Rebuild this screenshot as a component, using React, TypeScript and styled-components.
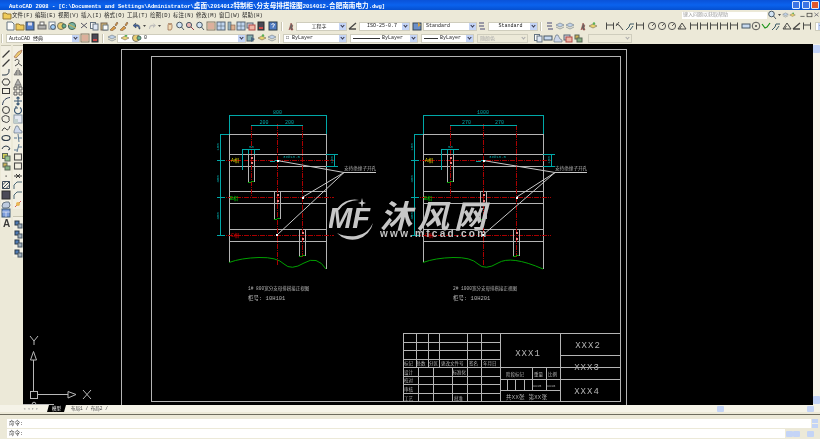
import React from 'react';
import styled, { createGlobalStyle } from 'styled-components';

const CHROME = '#ece9d8';
const LINE = '#b4b4b4';
const RED = '#a80000';
const CYAN = '#00a8a8';
const GREEN = '#00a000';
const CJK = '"Liberation Mono", "Noto Sans CJK SC", monospace';

const icons: Record<string, React.ReactNode> = {
  page: <path d="M2 1h5l2 2v6H2z" fill="#fff" stroke="#567" />,
  open: <path d="M1 3h3l1 1h4v5H1z" fill="#f0c84a" stroke="#8a6a20" />,
  save: <g><rect x="1" y="1" width="8" height="8" fill="#3f6fc8" stroke="#234" /><rect x="3" y="1.5" width="4" height="3" fill="#dde" /></g>,
  print: <g><rect x="1" y="4" width="8" height="4" fill="#aaa" stroke="#555" /><rect x="3" y="1" width="4" height="3" fill="#fff" stroke="#555" /></g>,
  preview: <g><rect x="2" y="1" width="6" height="7" fill="#fff" stroke="#678" /><circle cx="6" cy="6" r="2.4" fill="#9cf" stroke="#345" /></g>,
  sheet: <g><circle cx="4" cy="5" r="3.5" fill="#e8c860" stroke="#665" /><circle cx="7" cy="5" r="2" fill="#5a8" stroke="#354" /></g>,
  globe: <g><circle cx="5" cy="5" r="3.6" fill="#6a9" stroke="#354" /><path d="M1 3l8 4" stroke="#ca4" fill="none" /></g>,
  cut: <path d="M2 2l6 5M8 2L2 7" stroke="#445" fill="none" />,
  copy: <g><rect x="1.5" y="1.5" width="5" height="6" fill="#fff" stroke="#567" /><rect x="4" y="3" width="5" height="6" fill="#dfe8f8" stroke="#567" /></g>,
  paste: <g><rect x="2" y="2" width="6" height="7" fill="#d8b060" stroke="#654" /><rect x="4" y="4" width="5" height="5" fill="#fff" stroke="#567" /></g>,
  brush: <path d="M1 9l4-4 2 2-4 3zM6 4l2-3 1 1-2 3z" fill="#d89030" stroke="#643" strokeWidth=".6" />,
  undo: <path d="M8 8C8 4 6 3 3 4L4 2 1 4.5 4 7V5c2 0 3 1 3 3z" fill="#2a50a0" stroke="#123" strokeWidth=".5" />,
  redo: <path d="M2 8c0-4 2-5 5-4L6 2l3 2.500L6 7V5C4 5 3 6 3 8z" fill="#b8b8b8" />,
  caret: <path d="M2 3h6L5 7z" fill="#333" />,
  pan: <path d="M3 9V4l1-2 1 2 1-2 1 2v3l-1 2z" fill="#f2d8b0" stroke="#853" strokeWidth=".7" />,
  zoom: <g><circle cx="4.500" cy="4" r="2.800" fill="#cfe4fa" stroke="#345" /><path d="M6.500 6l2.500 3" stroke="#345" /></g>,
  zoomr: <g><circle cx="4" cy="4" r="2.600" fill="#e8b0b0" stroke="#345" /><path d="M6 6l3 3" stroke="#823" /></g>,
  props: <g><rect x="1" y="1" width="8" height="8" fill="#f4e8c8" stroke="#765" /><path d="M2 3h6M2 5h6M2 7h6" stroke="#a33" strokeWidth=".7" /></g>,
  sheetset: <g><rect x="1" y="1" width="8" height="8" fill="#bcd4f4" stroke="#456" /><path d="M5 1v8M1 5h8" stroke="#456" strokeWidth=".6" /></g>,
  tool: <g><rect x="2" y="1" width="3" height="8" fill="#8ab" stroke="#345" strokeWidth=".6" /><rect x="5" y="4" width="4" height="5" fill="#da8" stroke="#643" strokeWidth=".6" /></g>,
  stack: <g><rect x="1" y="2" width="6" height="5" fill="#ccd" stroke="#456" /><rect x="3" y="4" width="6" height="5" fill="#f0b0a0" stroke="#a33" /></g>,
  dark: <g><rect x="2" y="1" width="6" height="8" fill="#334" stroke="#111" /><rect x="3" y="6" width="4" height="2" fill="#c33" /></g>,
  help: <g><rect x="1" y="1" width="8" height="8" fill="#3a6cc0" stroke="#123" /><path d="M3.500 3.500Q5 1.800 6.500 3.500 6.500 4.600 5 5.500V6.500" stroke="#fff" fill="none" /></g>,
  textstyle: <path d="M3 9l2-7 2 3-1 1 1 3H5L4.500 7z" fill="#555" stroke="#822" strokeWidth=".5" />,
  dimstyle: <path d="M1 8L8 2M1 8h7" stroke="#333" strokeWidth="1.300" fill="none" />,
  tablestyle: <g><rect x="1" y="2" width="8" height="7" fill="#5a84c8" stroke="#234" /><path d="M6 1l3 3-3 2" fill="#c93" /></g>,
  mlstyle: <path d="M2 2h5M2 5h5M3 8h5" stroke="#336" strokeWidth="1.200" fill="none" />,
  layer: <g><path d="M5 2l4 2-4 2-4-2z" fill="#bcd0ec" stroke="#567" strokeWidth=".6" /><path d="M1 6l4 2 4-2" fill="none" stroke="#567" strokeWidth=".6" /></g>,
  layerS: <g><path d="M5 3l4 2-4 2-4-2z" fill="#e8d060" stroke="#654" strokeWidth=".6" /><circle cx="6" cy="2.500" r="1.200" fill="#4a4" /></g>,
  layerT: <g><rect x="1" y="2" width="6" height="6" fill="#7aa" stroke="#345" /><path d="M5 4l4 2-4 3z" fill="#357" /></g>,
  linear: <path d="M1.500 1.500v7M8.500 1.500v7M1.500 4h7" stroke="#333" fill="none" />,
  aligned: <path d="M1 3l3 1 4 5M4 1L1 5" stroke="#333" fill="none" />,
  ordinate: <path d="M1 9l3-3 1-3h4M5 9l3-4" stroke="#245" fill="none" />,
  radius: <g><circle cx="5" cy="5" r="3.600" fill="none" stroke="#444" /><path d="M5 5l3-3" stroke="#444" /></g>,
  angle: <path d="M1 8h8L5 2zM3 8q0-2 1.500-3" fill="none" stroke="#333" />,
  tolerance: <rect x="1" y="3" width="8" height="4" fill="#c4d8f4" stroke="#345" />,
  center: <g><circle cx="5" cy="5" r="3.800" fill="none" stroke="#444" /><circle cx="5" cy="5" r="1" fill="#333" /></g>,
  check: <path d="M1 3l3 4 2-1 3-4" stroke="#080" fill="none" strokeWidth="1.200" />,
  line: <path d="M1.500 8.500l7-7" stroke="#222" fill="none" strokeWidth="1.200" />,
  pline: <path d="M1 8h3c3 0 4-2 4-4V2" stroke="#123" fill="none" />,
  polygon: <path d="M3 2h4l2 3-2 3H3L1 5z" stroke="#222" fill="none" />,
  rect: <rect x="1.500" y="2.500" width="7" height="5" stroke="#222" fill="none" />,
  minus: <path d="M2 7h6" stroke="#444" fill="none" strokeWidth="1.200" />,
  arc: <path d="M1.500 9C2 4 5 2 9 1.500" stroke="#124" fill="none" />,
  circle: <circle cx="5" cy="5" r="3.500" stroke="#222" fill="none" />,
  cloud: <path d="M3 2q2-1 3 0 3 0 2 3 1 2-1 3-2 1-3 0-3 0-3-3-1-2 2-3z" stroke="#333" fill="none" />,
  spline: <path d="M1 7q2-5 4-2t4-3" stroke="#333" fill="none" />,
  ellipse: <ellipse cx="5" cy="5" rx="4" ry="2.500" stroke="#123" fill="none" strokeWidth="1.200" />,
  ellarc: <path d="M1 6Q2 3 5 3t4 3L7 7" stroke="#123" fill="none" />,
  block: <g><rect x="1.500" y="1.500" width="5" height="5" fill="#cc4" stroke="#454" /><rect x="4" y="4" width="5" height="5" fill="#8b8" stroke="#454" /></g>,
  insert: <g><rect x="2" y="2" width="4" height="4" fill="#ca4" stroke="#454" /><rect x="4" y="5" width="5" height="4" fill="#7a7" stroke="#454" /></g>,
  point: <rect x="4.500" y="4.500" width="1.200" height="1.200" fill="#222" />,
  hatch: <path d="M1.500 1.500h7v7h-7zM1.500 5l3.500-3.500M1.500 8.500l7-7M5 8.500L8.500 5" fill="none" stroke="#234" />,
  grad: <rect x="1" y="1" width="8" height="8" fill="#334" stroke="#111" />,
  region: <path d="M1 7q0-4 4-4h3l1 3q0 3-3 3H2z" fill="#b8c8e0" stroke="#567" />,
  table: <g><rect x="1" y="1" width="8" height="8" fill="#6c92dc" stroke="#246" /><path d="M1 4h8M5 4v5" stroke="#fff" strokeWidth=".6" /></g>,
  mtext: <text x="2" y="9" fontSize="10" fontWeight="700" fontFamily="Liberation Sans" fill="#222">A</text>,
  erase: <path d="M1 8l4-5 4-2-1 3-5 5z" fill="#e8c860" stroke="#954" strokeWidth=".7" />,
  cloneobj: <path d="M2 3a2 2 0 1 1 3 2l4 3M2 8l3-2" stroke="#333" fill="none" />,
  mirror: <path d="M5 1v8M1 8l3-5v5zM9 8L6 3v5z" fill="#999" stroke="#444" strokeWidth=".6" />,
  offset: <path d="M2 8l3-6 3 6zM1 9h8" fill="#aaa" stroke="#444" strokeWidth=".7" />,
  array: <path d="M1 1h3v3H1zM6 1h3v3H6zM1 6h3v3H1zM6 6h3v3H6z" fill="none" stroke="#444" />,
  move: <path d="M5 1v8M1 5h8M3.500 2.500L5 1l1.500 1.500M3.500 7.500L5 9l1.500-1.500" stroke="#246" fill="none" strokeWidth="1.100" />,
  rotate: <path d="M3 2.500A3.500 3.500 0 1 0 7 2.500M3 1v2h2" stroke="#246" fill="none" strokeWidth="1.100" />,
  scale: <g><rect x="1" y="1" width="8" height="8" fill="#e4e8f4" stroke="#789" /><rect x="1" y="5" width="4" height="4" fill="#bcc" /></g>,
  stretch: <path d="M1 9V7l2-5h2l2 4 2 1v2z" fill="#c8d4ec" stroke="#567" strokeWidth=".7" />,
  trim: <path d="M1 5h3M6 5h3M5 1l1 8" stroke="#468" fill="none" />,
  extend: <path d="M1 7h3M5 4h4M6 1L4 9" stroke="#468" fill="none" />,
  breakb: <rect x="1.500" y="2" width="7" height="6" fill="none" stroke="#333" strokeWidth="1.100" />,
  join: <path d="M1 5h3M6 5h3M3 3l2 2-2 2M7 3L5 5l2 2" stroke="#222" fill="none" />,
  chamfer: <path d="M1 9V5l3-3h5" stroke="#356" fill="none" />,
  explode: <g><path d="M2 8l3-3 3-3" stroke="#c44" /><circle cx="5" cy="5" r="2" fill="#e8b040" /></g>,
  draw: <g><rect x="2" y="2" width="4" height="4" fill="#3a6cb0" stroke="#123" /><rect x="5" y="5" width="4" height="4" fill="#9ab" stroke="#345" /></g>,
};

const row1L: (string | number)[] = ['page', 'open', 'save', 2, 'print', 'preview', 'sheet', 'globe', 2, 'cut', 'copy', 'paste', 'brush', 'brush', 3, 'undo', 'caret', 'redo', 'caret', 3, 'pan', 'zoom', 'zoomr', 'zoom', 1, 'props', 'sheetset', 'tool', 'sheetset', 'stack', 'dark', 2, 'help'];
const row1R: (string | number)[] = ['mlstyle', 'layer', 'layer', 3, 'textstyle', 'layerS', 7, 'linear', 'aligned', 'ordinate', 'linear', 2, 'radius', 'radius', 'radius', 'angle', 2, 'linear', 'linear', 'linear', 'linear', 'linear', 2, 'tolerance', 'center', 'check', 'ordinate', 1, 'angle', 'dimstyle', 'linear'];
const row2R: (string | number)[] = ['copy', 'tolerance', 'stretch', 'stack', 'insert'];
const leftA = ['line', 'line', 'pline', 'polygon', 'rect', 'arc', 'circle', 'cloud', 'spline', 'ellipse', 'ellarc', 'block', 'insert', 'point', 'hatch', 'grad', 'region', 'table', 'mtext'];
const leftB = ['erase', 'cloneobj', 'mirror', 'offset', 'array', 'move', 'rotate', 'scale', 'stretch', 'trim', 'extend', 'breakb', 'breakb', 'join', 'chamfer', 'chamfer', 'explode'];
const menus = ['文件(F)', '编辑(E)', '视图(V)', '插入(I)', '格式(O)', '工具(T)', '绘图(D)', '标注(N)', '修改(M)', '窗口(W)', '帮助(H)'];

const Global = createGlobalStyle`
  html, body { margin: 0; padding: 0; background: ${CHROME}; overflow: hidden; }
`;

const Window = styled.div`
  width: 820px;
  height: 439px;
  display: flex;
  flex-direction: column;
  overflow: hidden;
  background: ${CHROME};
  font-family: ${CJK};
  filter: blur(0.35px);
`;

const TitleBar = styled.div`
  height: 10px;
  flex: none;
  display: flex;
  align-items: center;
  padding: 0 1px 0 9px;
  background: linear-gradient(#0a52d8, #0a62ee 50%, #0550d0);
  color: #fff;
  font-size: 5.5px;
  font-weight: 700;
  white-space: nowrap;
`;

const TitleText = styled.span`
  flex: 1;
`;

const Han = styled.span`
  font-size: 6.6px;
`;

const WinButton = styled.span<{ $close?: boolean }>`
  width: 8px;
  height: 8px;
  margin-left: 1.500px;
  box-sizing: border-box;
  border: 1px solid #dfe8fb;
  border-radius: 1px;
  background: ${(p) => (p.$close ? '#e0562c' : '#3c74e4')};
`;

const MenuBar = styled.div`
  height: 10px;
  flex: none;
  display: flex;
  align-items: center;
  padding-left: 2px;
  font-size: 5.5px;
  color: #222;
`;

const MenuItem = styled.span`
  width: 23px;
  white-space: nowrap;
`;

const HelpBox = styled.div`
  margin-left: auto;
  width: 85px;
  height: 7px;
  background: #fff;
  font-size: 5px;
  line-height: 7px;
  color: #999;
  padding-left: 1px;
  box-sizing: border-box;
  white-space: nowrap;
`;

const HelpIcons = styled.div`
  display: flex;
  align-items: center;
  width: 53px;
  flex: none;
`;

const ToolRow = styled.div`
  height: 12px;
  flex: none;
  display: flex;
  align-items: center;
  overflow: hidden;
`;

const Tool = styled.svg<{ $w: number }>`
  width: ${(p) => p.$w}px;
  height: 10px;
  flex: none;
  opacity: 0.88;
`;

const Spacer = styled.span<{ $w: number }>`
  width: ${(p) => p.$w}px;
  flex: none;
`;

const Grip = styled.span`
  width: 2px;
  height: 9px;
  flex: none;
  margin: 0 3px 0 1px;
  border-left: 1px solid #c8c5b2;
  border-right: 1px solid #fff;
  box-sizing: border-box;
`;

const Combo = styled.div<{ $w: number; $off?: boolean }>`
  width: ${(p) => p.$w}px;
  height: 9px;
  flex: none;
  box-sizing: border-box;
  display: flex;
  align-items: center;
  border: 1px solid #cfcdbd;
  background: ${(p) => (p.$off ? CHROME : '#fff')};
  color: ${(p) => (p.$off ? '#aaa' : '#222')};
  font-size: 5px;
  white-space: nowrap;
  overflow: hidden;
`;

const ComboText = styled.span<{ $center?: boolean }>`
  flex: 1;
  display: flex;
  align-items: center;
  justify-content: ${(p) => (p.$center ? 'center' : 'flex-start')};
  gap: 2px;
  padding-left: 2px;
`;

const ComboArrow = styled.span<{ $off?: boolean }>`
  width: 7px;
  height: 100%;
  flex: none;
  background: ${(p) => (p.$off ? CHROME : '#c4d4f6')};
  position: relative;
  &::after {
    content: '';
    position: absolute;
    left: 2px;
    top: 1.500px;
    width: 2px;
    height: 2px;
    border-right: 1px solid ${(p) => (p.$off ? '#aaa' : '#334')};
    border-bottom: 1px solid ${(p) => (p.$off ? '#aaa' : '#334')};
    transform: rotate(45deg);
  }
`;

const Swatch = styled.span<{ $w: number }>`
  width: ${(p) => p.$w}px;
  height: 1px;
  background: #333;
`;

const Workspace = styled.div`
  flex: 1;
  min-height: 0;
  display: flex;
`;

const Dock = styled.div`
  width: 23px;
  flex: none;
  display: flex;
  gap: 1px;
  align-items: flex-start;
  padding-top: 1px;
  box-sizing: border-box;
`;

const DockColumn = styled.div`
  width: 11px;
  display: flex;
  flex-direction: column;
  align-items: center;
  gap: 7px;
`;

const DockBar = styled.div`
  display: flex;
  flex-direction: column;
  align-items: center;
  padding-top: 3px;
  border-top: 1px solid #c8c5b2;
  background: #f2efe2;
`;

const DockSlot = styled.span`
  height: 9.4px;
  display: flex;
  align-items: center;
`;

const Canvas = styled.div`
  flex: 1;
  position: relative;
  background: #000;
  overflow: hidden;
`;

const Drawing = styled.svg`
  display: block;
  shape-rendering: crispEdges;
  font-family: ${CJK};
`;

const Small = styled.text<{ $tone?: string; $size?: number }>`
  fill: ${(p) => p.$tone ?? LINE};
  font-size: ${(p) => p.$size ?? 5}px;
  shape-rendering: auto;
`;

const Watermark = styled.div`
  position: absolute;
  left: 306px;
  top: 152px;
  display: flex;
  gap: 1px;
  color: #c6c6c6;
`;

const Brand = styled.div`
  display: flex;
  flex-direction: column;
  width: 110px;
`;

const BrandName = styled.span`
  font-family: "Noto Sans CJK SC", sans-serif;
  font-size: 32px;
  line-height: 36px;
  font-weight: 700;
  font-style: italic;
  letter-spacing: 5px;
  white-space: nowrap;
`;

const BrandUrl = styled.span`
  font-family: "Liberation Sans", sans-serif;
  font-size: 10px;
  line-height: 9px;
  font-weight: 700;
  letter-spacing: 2.300px;
  white-space: nowrap;
  margin-top: -3px;
`;

const VScroll = styled.div`
  width: 7px;
  flex: none;
  display: flex;
  flex-direction: column;
  justify-content: space-between;
  padding: 1px 0;
  box-sizing: border-box;
  background: #f6f4ea;
`;

const ScrollBtn = styled.span`
  width: 7px;
  height: 8px;
  background: #c4d4f6;
  border-radius: 1px;
  display: block;
`;

const TabRow = styled.div`
  height: 7px;
  flex: none;
  display: flex;
  align-items: center;
  padding-left: 23px;
  font-size: 4.500px;
  background: #f5f3e8;
  color: #444;
`;

const TabNav = styled.span`
  width: 24px;
  color: #999;
  letter-spacing: 1.500px;
  white-space: nowrap;
`;

const Tab = styled.span<{ $active?: boolean }>`
  height: 7px;
  line-height: 7px;
  padding: 0 5px;
  white-space: nowrap;
  background: ${(p) => (p.$active ? '#000' : 'transparent')};
  color: ${(p) => (p.$active ? '#fff' : '#444')};
  clip-path: ${(p) => (p.$active ? 'polygon(2px 0, 100% 0, calc(100% - 2px) 100%, 0 100%)' : 'none')};
`;

const HScroll = styled.div`
  margin-left: auto;
  width: 110px;
  height: 7px;
  display: flex;
  align-items: center;
  padding-left: 7px;
  box-sizing: border-box;
`;

const Thumb = styled.span<{ $mr: number }>`
  width: 7px;
  height: 6px;
  margin-right: ${(p) => p.$mr}px;
  background: #c4d4f6;
  border-radius: 1px;
  flex: none;
`;

const Command = styled.div`
  height: 25px;
  flex: none;
  box-sizing: border-box;
  border-top: 1px solid #6e6c5e;
  margin-top: 2px;
  padding: 4px 0 0 7px;
  display: flex;
  flex-direction: column;
  gap: 1px;
`;

const CommandRow = styled.div`
  height: 9px;
  flex: none;
  display: flex;
  align-items: center;
`;

const CommandLine = styled.div`
  flex: 1;
  height: 100%;
  background: #fff;
  font-size: 5.500px;
  line-height: 9px;
  color: #333;
  padding-left: 2px;
`;

const CommandSide = styled.div<{ $w: number }>`
  width: ${(p) => p.$w}px;
  flex: none;
  display: flex;
  align-items: center;
  padding-left: 1px;
  box-sizing: border-box;
`;

const Stepper = styled.span`
  width: 6px;
  height: 9px;
  background: linear-gradient(#c4d4f6 45%, #f0efe6 45% 55%, #c4d4f6 55%);
`;

const Icon = ({ kind, w = 10 }: { kind: string; w?: number }) => (
  <Tool $w={w} viewBox="0 0 10 10">{icons[kind]}</Tool>
);

const Tools = ({ items }: { items: (string | number)[] }) => (
  <>
    {items.map((it, i) =>
      typeof it === 'number' ? (
        <Spacer key={i} $w={it} />
      ) : (
        <Icon key={i} kind={it} w={it === 'caret' ? 5 : 10} />
      ),
    )}
  </>
);

const Select = ({ w, off, center, children }: { w: number; off?: boolean; center?: boolean; children?: React.ReactNode }) => (
  <Combo $w={w} $off={off}>
    <ComboText $center={center}>{children}</ComboText>
    <ComboArrow $off={off} />
  </Combo>
);

type PlateProps = {
  x0: number; x1: number; v: [number, number, number];
  total: string; part: string; leader: number; no: string; title: string; capX: number;
};

const Plate = ({ x0, x1, v, total, part, leader, no, title, capX }: PlateProps) => {
  const rows = [134, 154, 166, 191, 203, 229, 241];
  const busY = [160, 197, 235];
  const holes = [[v[0], 149, 182], [v[1], 191, 219], [v[2], 229, 256]];
  const dimL = x0 - 9;
  const dimR = x1 + 8;
  const mid = (x0 + x1) / 2;
  return (
    <g fill="none">
      {rows.map((y) => <line key={y} x1={x0} x2={x1} y1={y + 0.5} y2={y + 0.5} stroke={LINE} />)}
      <line x1={x0 + 0.5} x2={x0 + 0.5} y1={134} y2={262} stroke={LINE} />
      <line x1={x1 + 0.5} x2={x1 + 0.5} y1={134} y2={269} stroke={LINE} />
      <path
        d={`M${x0} 262.500Q${x0 + 12} 258 ${x0 + 30} 257.500T${x0 + 55} 264T${x0 + 75} 263T${x1} 269`}
        stroke={GREEN}
        style={{ shapeRendering: 'auto' }}
      />
      {busY.map((y) => (
        <line key={y} x1={dimL} x2={dimR} y1={y + 0.5} y2={y + 0.5} stroke={RED} strokeDasharray="5 1 1 1" />
      ))}
      <line x1={v[0] + 0.5} x2={v[0] + 0.5} y1={125} y2={197} stroke={RED} strokeDasharray="5 1 1 1" />
      <line x1={v[1] + 0.5} x2={v[1] + 0.5} y1={124} y2={265} stroke={RED} strokeDasharray="5 1 1 1" />
      <line x1={v[2] + 0.5} x2={v[2] + 0.5} y1={125} y2={257} stroke={RED} strokeDasharray="5 1 1 1" />
      {holes.map(([hx, top, bottom]) => (
        <g key={hx}>
          <path d={`M${hx - 3} ${top}V${bottom}M${hx + 3} ${top}V${bottom}`} stroke={LINE} />
          <path d={`M${hx - 3} ${bottom + 0.5}L${hx + 3} ${bottom - 0.5}`} stroke={GREEN} />
          <rect x={hx - 0.5} y={top + (top === 149 ? 8 : 3)} width="2" height="2" fill="#f08080" />
          <rect x={hx - 0.5} y={top + (top === 149 ? 13 : 9)} width="2" height="2" fill="#f08080" />
        </g>
      ))}
      <path
        d={`M${x0} 115.500H${x1 + 1}M${x0 + 0.5} 115V134M${x1 + 0.5} 115V134M${v[0]} 125.500H${v[2] + 1}M${dimL} 134.500H${x0}M${dimL + 0.5} 134V235M${dimL - 3} 160.500H${dimL + 5}M${dimL - 3} 197.500H${dimL + 5}M${dimL - 3} 235.500H${dimL + 5}M${x1} 154.500H${dimR + 4}M${x1} 166.500H${dimR + 4}M${dimR + 0.5} 154V166M${v[0] - 9} 149.500H${v[0] + 9}M${v[0] - 8.500} 149V170M${v[0] - 3} 149V154M${v[0] + 3} 149V154`}
        stroke={CYAN}
      />
      <Small x={mid} y={114} textAnchor="middle" $tone={CYAN}>{total}</Small>
      <Small x={(v[0] + v[1]) / 2} y={124} textAnchor="middle" $tone={CYAN}>{part}</Small>
      <Small x={(v[1] + v[2]) / 2} y={124} textAnchor="middle" $tone={CYAN}>{part}</Small>
      <Small x={v[0] + 0.5} y={148} textAnchor="middle" $tone={CYAN} $size={4}>50</Small>
      <Small x={v[1] + 6} y={158} $tone={CYAN} $size={4}>3xΦ13.5</Small>
      <path d={`M${v[1] - 7} 161.500L${v[1] + 3} 160.500`} stroke={CYAN} />
      <Small transform={`translate(${dimL - 1},147) rotate(-90)`} textAnchor="middle" $tone={CYAN} $size={4}>100</Small>
      <Small transform={`translate(${dimL - 1},179) rotate(-90)`} textAnchor="middle" $tone={CYAN} $size={4}>300</Small>
      <Small transform={`translate(${dimL - 1},216) rotate(-90)`} textAnchor="middle" $tone={CYAN} $size={4}>300</Small>
      <Small transform={`translate(${dimR - 1},160) rotate(-90)`} textAnchor="middle" $tone={CYAN} $size={4}>100</Small>
      <Small x={x0 + 2} y={162} $tone="#d8d000" $size={5}>A相</Small>
      <Small x={x0 + 1} y={200} $tone="#00d000" $size={5}>B相</Small>
      <Small x={x0 + 2} y={237} $tone="#e00000" $size={5}>C相</Small>
      <g stroke="#c8c8c8" style={{ shapeRendering: 'auto' }}>
        <path d={`M${v[1]} 160.500L${leader} 172.500M${leader} 172.500L${v[2]} 197.500M${leader} 172.500L${v[1]} 235M${leader} 172.500H${leader + 32}`} />
      </g>
      <rect x={v[1]} y={160} width="2" height="2" fill="#fff" />
      <rect x={v[2] - 0.5} y={197} width="2" height="2" fill="#fff" />
      <rect x={v[1] - 1} y={234} width="2" height="2" fill="#fff" />
      <Small x={leader} y={170} $size={4.600}>支持绝缘子开孔</Small>
      <Small x={capX} y={290} $size={4.500}>{title}</Small>
      <Small x={capX} y={299.500} $size={5.500}>柜号: {no}</Small>
    </g>
  );
};

const TitleBlock = () => {
  const grid = [342, 350, 359, 367, 376, 384, 393];
  const cells: [number, number, string][] = [
    [404, 365, '标记'], [416.5, 365, '处数'], [429, 365, '分区'], [441, 365, '更改文件号'], [469, 365, '签名'], [483, 365, '年月日'],
    [404, 373.500, '设计'], [452.5, 373.500, '标准化'], [404, 382, '校对'], [404, 391, '审核'], [404, 399.500, '工艺'], [454, 399.500, '批准'],
    [506, 375.500, '阶段标记'], [534, 375.500, '重量'], [548, 375.500, '比例'],
  ];
  return (
    <g fill="none" stroke={LINE}>
      <rect x="403.500" y="333.500" width="217" height="68" />
      {grid.map((y) => <line key={y} x1={403} x2={500} y1={y + 0.5} y2={y + 0.5} />)}
      {[416, 428, 439, 467, 481].map((x) => <line key={x} x1={x + 0.5} x2={x + 0.5} y1={333} y2={367} />)}
      {[418, 433, 452, 467, 481].map((x) => <line key={x} x1={x + 0.5} x2={x + 0.5} y1={367} y2={402} />)}
      <path d="M500.500 333V402M560.500 333V402M500 367.500H620M500 379.500H560M500 390.500H560M560 355.500H620M560 379.500H620M532.500 367V390M546.500 367V390M507.500 379V390M515.500 379V390M524.500 379V390" />
      <g stroke="none">
        {cells.map(([x, y, t]) => <Small key={x + t} x={x} y={y} $size={4.500}>{t}</Small>)}
        <Small x={506} y={399} $size={5.500} letterSpacing="0.300">共XX张 第XX张</Small>
        <Small x={533} y={387} $size={3.500}>XXX5</Small>
        <Small x={547} y={387} $size={3.500}>XXX6</Small>
        <Small x={528} y={356} textAnchor="middle" $size={9} letterSpacing="1">XXX1</Small>
        <Small x={588} y={348} textAnchor="middle" $size={9} letterSpacing="1">XXX2</Small>
        <Small x={587} y={370} textAnchor="middle" $size={9} letterSpacing="1">XXX3</Small>
        <Small x={587} y={394} textAnchor="middle" $size={9} letterSpacing="1">XXX4</Small>
      </g>
    </g>
  );
};

const Ucs = () => (
  <g fill="none" stroke="#b8b8b8" style={{ shapeRendering: 'auto' }}>
    <rect x="30.500" y="391.500" width="7" height="7" />
    <path d="M33.500 391V360M30.500 360L33.500 351.500L36.500 360ZM37.500 394.500H68M68 391.500L76 394.500L68 398ZM30 336l4 5 4-5M34 341v4M83 390l8 9M91 390l-8 9M23 404.500H54" />
    <circle cx="34" cy="404" r="1.800" />
  </g>
);

const Logo = () => (
  <svg width="50" height="46" viewBox="0 0 50 46">
    <path d="M8 37A21 21 0 0 0 44 27Q39 38 27 40 16 41 8 37Z" fill="#c6c6c6" />
    <path d="M7 15A21 21 0 0 1 30 4Q17 4 10 14Z" fill="#c6c6c6" />
    <path d="M33 2l1 4 3 1-3 1-1 4-1-4-3-1 3-1z" fill="#c6c6c6" />
    <text x="-1" y="32" fontFamily="Liberation Sans" fontSize="29" fontWeight="700" fontStyle="italic" fill="#c6c6c6">MF</text>
  </svg>
);

export default function App() {
  return (
    <Window>
      <Global />
      <TitleBar>
        <TitleText>AutoCAD 2008 - [C:\Documents and Settings\Administrator\<Han>桌面</Han>\2014012<Han>特制柜</Han>\<Han>分支母排搭接图</Han>2014012-<Han>合肥南南电力</Han>.dwg]</TitleText>
        <WinButton />
        <WinButton />
        <WinButton $close />
      </TitleBar>
      <MenuBar>
        <Icon kind="open" />
        {menus.map((m) => <MenuItem key={m}>{m}</MenuItem>)}
        <HelpBox>键入问题以获取帮助</HelpBox>
        <HelpIcons>
          <Icon kind="zoom" />
          <Icon kind="caret" w={5} />
          <Icon kind="layer" w={7} />
          <Icon kind="layerS" w={7} />
          <Spacer $w={3} />
          <Icon kind="minus" w={7} />
          <Icon kind="rect" w={7} />
          <Icon kind="cut" w={7} />
        </HelpIcons>
      </MenuBar>
      <ToolRow>
        <Spacer $w={5} />
        <Tools items={row1L} />
        <Spacer $w={2} />
        <Grip />
        <Icon kind="textstyle" />
        <Select w={51} center>工程字</Select>
        <Spacer $w={1} />
        <Icon kind="dimstyle" />
        <Spacer $w={1} />
        <Select w={51} center>ISO-25-0.7</Select>
        <Spacer $w={2} />
        <Icon kind="tablestyle" />
        <Spacer $w={1} />
        <Select w={54}>Standard</Select>
        <Icon kind="mlstyle" />
        <Spacer $w={1} />
        <Select w={50} center>Standard</Select>
        <Spacer $w={1} />
        <Grip />
        <Tools items={row1R} />
        <Spacer $w={3} />
        <Select w={10} />
      </ToolRow>
      <ToolRow>
        <Grip />
        <Select w={74}>AutoCAD 经典</Select>
        <Icon kind="props" />
        <Icon kind="dark" />
        <Spacer $w={1} />
        <Grip />
        <Icon kind="layer" />
        <Select w={129}><Icon kind="layerS" /><Icon kind="sheet" />0</Select>
        <Icon kind="layerT" />
        <Spacer $w={1} />
        <Icon kind="layerS" />
        <Icon kind="layer" />
        <Grip />
        <Select w={64}>□ ByLayer</Select>
        <Spacer $w={3} />
        <Select w={68}><Swatch $w={27} />ByLayer</Select>
        <Spacer $w={3} />
        <Select w={53}><Swatch $w={14} />ByLayer</Select>
        <Spacer $w={3} />
        <Select w={51} off>随颜色</Select>
        <Spacer $w={5} />
        <Tools items={row2R} />
        <Spacer $w={5} />
        <Select w={44} off />
      </ToolRow>
      <Workspace>
        <Dock>
          <DockColumn>
            <DockBar>
              {leftA.map((k, i) => <DockSlot key={i}><Icon kind={k} /></DockSlot>)}
            </DockBar>
          </DockColumn>
          <DockColumn>
            <DockBar>
              {leftB.map((k, i) => <DockSlot key={i}><Icon kind={k} /></DockSlot>)}
            </DockBar>
            <DockBar>
              {['draw', 'draw', 'draw', 'draw'].map((k, i) => <DockSlot key={i}><Icon kind={k} /></DockSlot>)}
            </DockBar>
          </DockColumn>
        </Dock>
        <Canvas>
          <Drawing width="790" height="362" viewBox="23 44 790 362">
            <g fill="none" stroke={LINE}>
              <path d="M121.500 412V49.500H626.500V412" />
              <rect x="151.500" y="56.500" width="469" height="345" />
            </g>
            <Plate x0={229} x1={326} v={[251, 277, 302]} total="800" part="200" leader={344} no="10H101" title="1# 800宽分支母排搭接正视图" capX={248} />
            <Plate x0={423} x1={543} v={[450, 483, 516]} total="1000" part="270" leader={555} no="10H201" title="2# 1000宽分支母排搭接正视图" capX={453} />
            <TitleBlock />
            <Ucs />
          </Drawing>
          <Watermark>
            <Logo />
            <Brand>
              <BrandName>沐风网</BrandName>
              <BrandUrl>www.mfcad.com</BrandUrl>
            </Brand>
          </Watermark>
        </Canvas>
        <VScroll>
          <ScrollBtn />
          <ScrollBtn />
        </VScroll>
      </Workspace>
      <TabRow>
        <TabNav>◂◂▸▸</TabNav>
        <Tab $active>模型</Tab>
        <Tab>布局1 / 布局2 /</Tab>
        <HScroll>
          <Thumb $mr={83} />
          <Thumb $mr={0} />
        </HScroll>
      </TabRow>
      <Command>
        <CommandRow>
          <CommandLine>命令:</CommandLine>
          <CommandSide $w={9}><Stepper /></CommandSide>
        </CommandRow>
        <CommandRow>
          <CommandLine>命令:</CommandLine>
          <CommandSide $w={35}>
            <Thumb $mr={0} />
            <Thumb $mr={7} />
            <Thumb $mr={0} />
          </CommandSide>
        </CommandRow>
      </Command>
    </Window>
  );
}
